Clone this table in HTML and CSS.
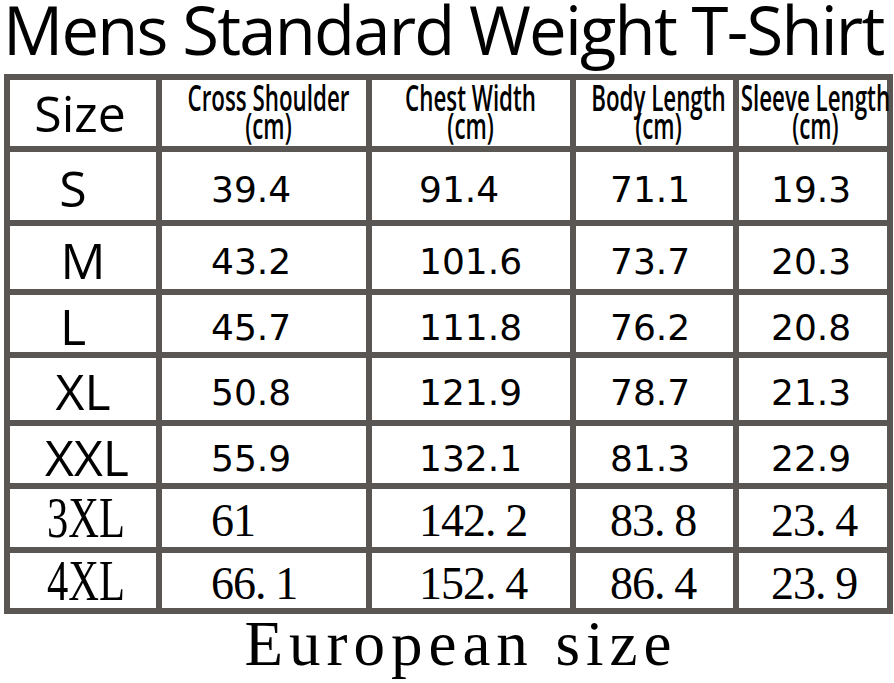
FILE: index.html
```html
<!DOCTYPE html>
<html lang="en">
<head>
<meta charset="utf-8">
<title>Mens Standard Weight T-Shirt</title>
<link rel="stylesheet" href="styles.css">
</head>
<body>
<h1 class="title">Mens Standard Weight T-Shirt</h1>
<div class="chart">
  <div class="cell size-head">Size</div>
  <div class="cell head h2"><span class="head-text">Cross Shoulder<br>(cm)</span></div>
  <div class="cell head h3"><span class="head-text">Chest Width<br>(cm)</span></div>
  <div class="cell head h4"><span class="head-text">Body Length<br>(cm)</span></div>
  <div class="cell head h5"><span class="head-text">Sleeve Length<br>(cm)</span></div>

  <div class="cell size narrow">S</div>
  <div class="cell val c2">39.4</div>
  <div class="cell val c3">91.4</div>
  <div class="cell val c4">71.1</div>
  <div class="cell val c5">19.3</div>

  <div class="cell size">M</div>
  <div class="cell val c2">43.2</div>
  <div class="cell val c3">101.6</div>
  <div class="cell val c4">73.7</div>
  <div class="cell val c5">20.3</div>

  <div class="cell size narrow">L</div>
  <div class="cell val c2">45.7</div>
  <div class="cell val c3">111.8</div>
  <div class="cell val c4">76.2</div>
  <div class="cell val c5">20.8</div>

  <div class="cell size">XL</div>
  <div class="cell val c2">50.8</div>
  <div class="cell val c3">121.9</div>
  <div class="cell val c4">78.7</div>
  <div class="cell val c5">21.3</div>

  <div class="cell size wide">XXL</div>
  <div class="cell val c2">55.9</div>
  <div class="cell val c3">132.1</div>
  <div class="cell val c4">81.3</div>
  <div class="cell val c5">22.9</div>

  <div class="cell size-serif"><span class="serif-label">3XL</span></div>
  <div class="cell sval c2">61</div>
  <div class="cell sval c3">142<span class="pt">.</span>2</div>
  <div class="cell sval c4">83<span class="pt">.</span>8</div>
  <div class="cell sval c5">23<span class="pt">.</span>4</div>

  <div class="cell size-serif"><span class="serif-label">4XL</span></div>
  <div class="cell sval c2">66<span class="pt">.</span>1</div>
  <div class="cell sval c3">152<span class="pt">.</span>4</div>
  <div class="cell sval c4">86<span class="pt">.</span>4</div>
  <div class="cell sval c5">23<span class="pt">.</span>9</div>
</div>
<p class="caption">European size</p>
</body>
</html>
```

FILE: styles.css
```css
html, body {
  margin: 0;
  padding: 0;
  background: #ffffff;
}

body {
  width: 894px;
  height: 683px;
  overflow: hidden;
  color: #000000;
}

.title {
  margin: -8px 0 8px 0;
  padding-left: 3px;
  font-family: "Open Sans", "Noto Sans", sans-serif;
  font-weight: 400;
  font-size: 67px;
  line-height: 74px;
  height: 74px;
  white-space: nowrap;
  text-align: left;
  letter-spacing: -1.8px;
}

.chart {
  margin-left: 4px;
  width: 889px;
  box-sizing: border-box;
  display: grid;
  grid-template-columns: 146px 204px 198px 157px 148px;
  grid-template-rows: 66px 68px 63px 57px 62px 57px 58px 55px;
  gap: 6px;
  padding: 6px;
  background: #5a5654;
}

.cell {
  background: #ffffff;
  display: flex;
  align-items: center;
  justify-content: center;
  white-space: nowrap;
  min-width: 0;
}

.size-head {
  font-family: "Open Sans", "Noto Sans", sans-serif;
  font-size: 50px;
  line-height: 1;
  padding-right: 6px;
}

.head-text {
  display: inline-block;
  font-family: "Open Sans", "Noto Sans", sans-serif;
  font-weight: 600;
  font-size: 36px;
  line-height: 28px;
  text-align: center;
  transform: scaleX(0.62);
  margin-top: -2px;
}

.h2 { padding-left: 8px; }
.h3 { padding-left: 0; }
.h4 { padding-left: 8px; }
.h5 { padding-left: 4px; }

.size {
  font-family: "Open Sans", "Noto Sans", sans-serif;
  font-size: 50px;
  line-height: 1;
  padding-top: 4px;
}

.narrow {
  padding-right: 20px;
}

.wide {
  padding-left: 8px;
}

.val {
  font-family: "DejaVu Sans", "Verdana", sans-serif;
  font-size: 36px;
  line-height: 1;
  padding-top: 8px;
  justify-content: flex-start;
}

.c2 { padding-left: 49px; }
.c3 { padding-left: 47px; }
.c4 { padding-left: 34px; }
.c5 { padding-left: 32px; }

.size-serif {
  font-family: "Liberation Serif", "Times New Roman", serif;
  font-size: 56px;
  line-height: 1;
  justify-content: flex-start;
  padding-left: 37px;
}

.serif-label {
  display: inline-block;
  transform: scaleX(0.76);
  transform-origin: left center;
}

.sval {
  font-family: "Liberation Serif", "Times New Roman", serif;
  font-size: 46px;
  line-height: 1;
  letter-spacing: -1px;
  padding-top: 6px;
  justify-content: flex-start;
}

.pt {
  display: inline-block;
  width: 0.44em;
  text-align: left;
}

.caption {
  margin: 0;
  padding-left: 28px;
  font-family: "Liberation Serif", "Times New Roman", serif;
  font-size: 63px;
  line-height: 60px;
  letter-spacing: 6px;
  text-align: center;
  white-space: nowrap;
}
```
